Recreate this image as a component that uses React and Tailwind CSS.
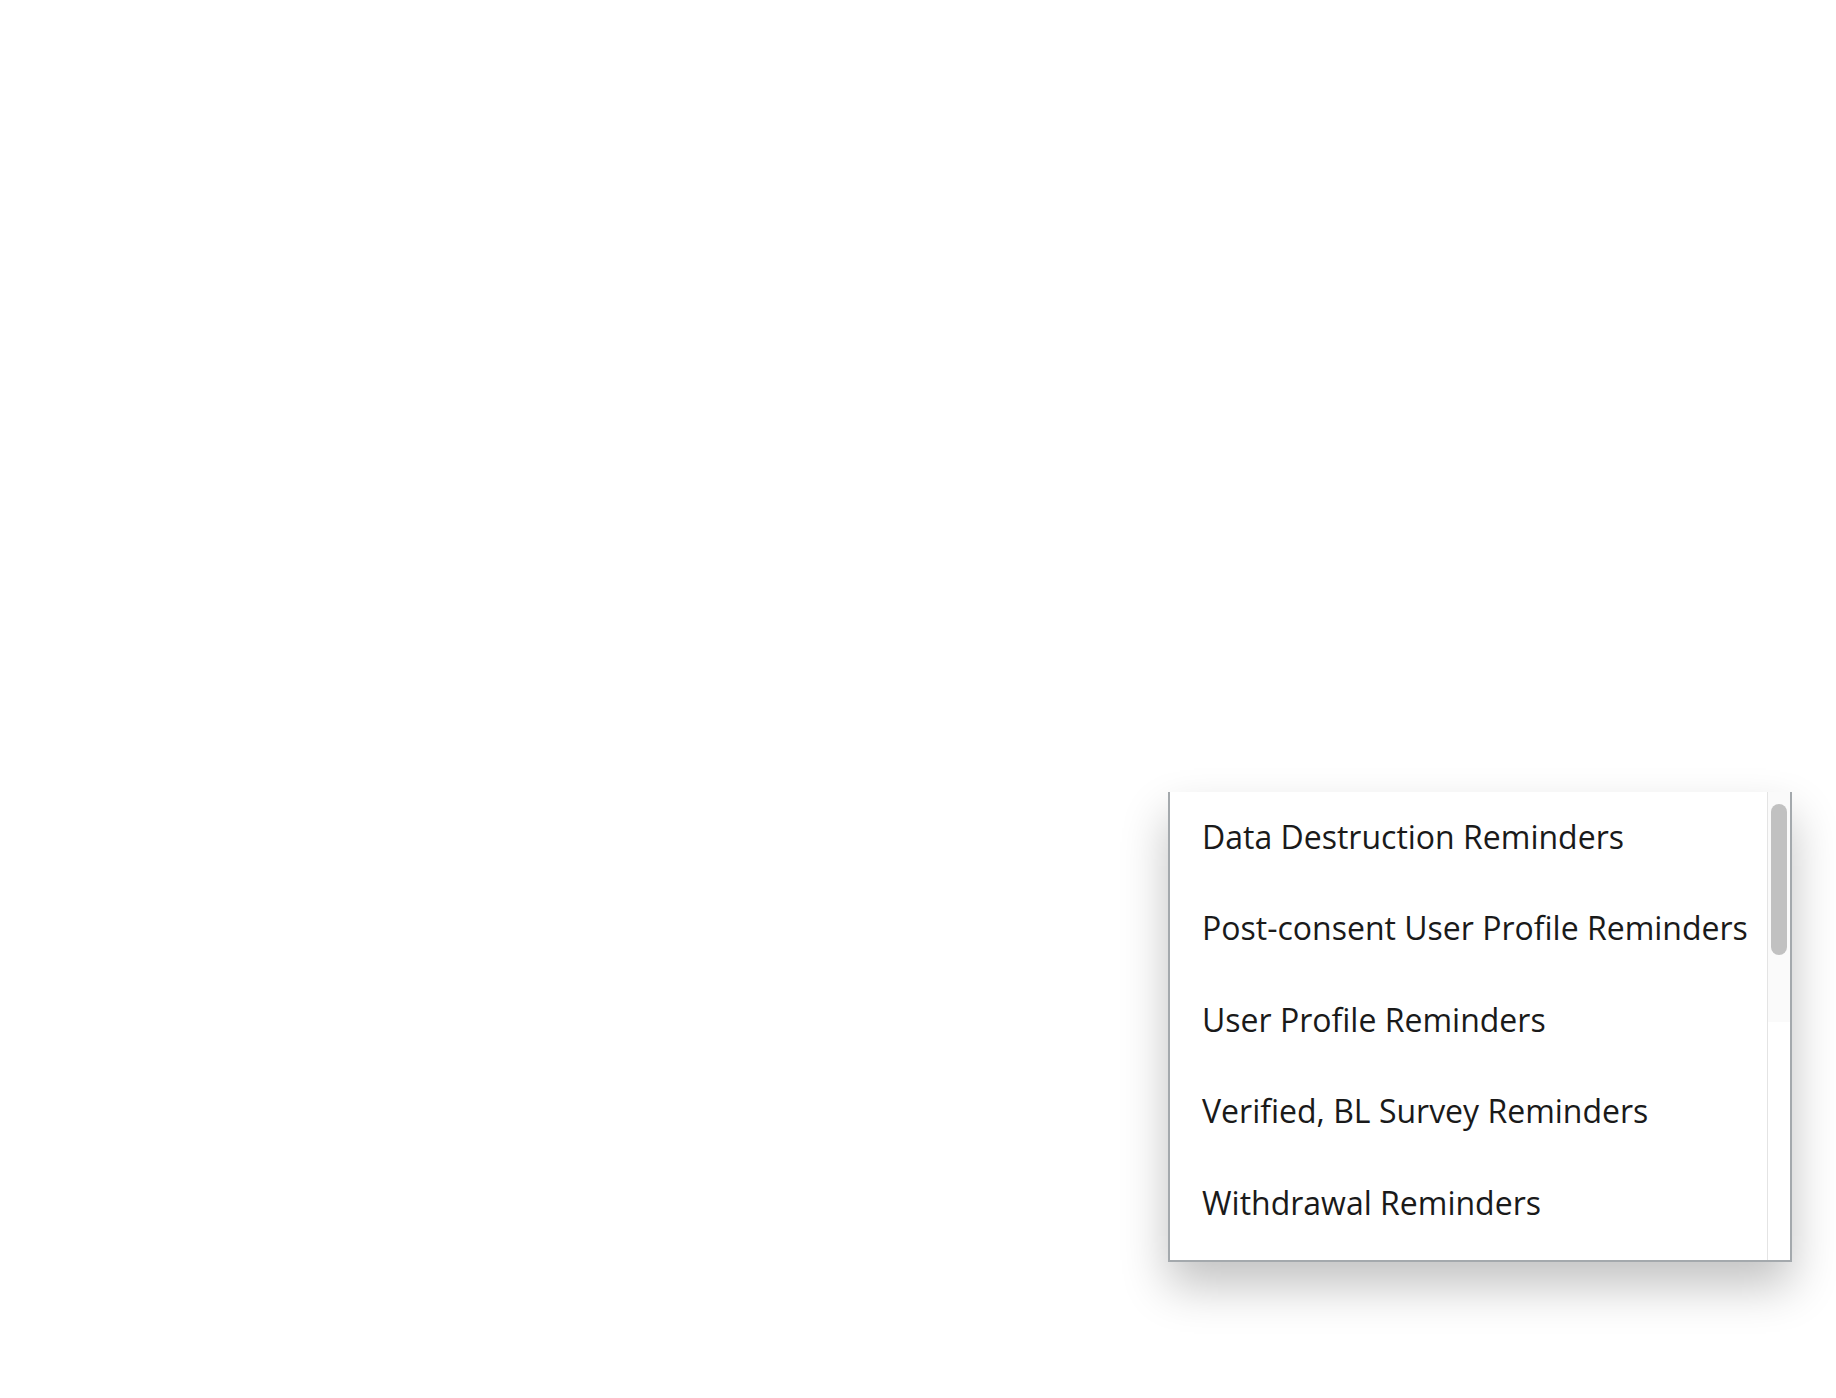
import React from "react";

const items = [
  "Data Destruction Reminders",
  "Post-consent User Profile Reminders",
  "User Profile Reminders",
  "Verified, BL Survey Reminders",
  "Withdrawal Reminders",
];

export default function App() {
  return (
    <div className="relative w-[1836px] h-[1398px] bg-white" style={{ fontFamily: '"Open Sans", "Noto Sans", sans-serif' }}>
      <div className="absolute left-[1168px] top-[792px] w-[624px] h-[470px] bg-white border-x-2 border-b-2 border-[#a4a9ad] shadow-[0_24px_44px_rgba(0,0,0,0.24)] flex">
        <ul className="flex-1 flex flex-col">
          {items.map((t) => (
            <li key={t} className="h-[91.5px] pt-[24.5px] pl-[32px] text-[32px] leading-[40px] text-[#1a1a1a] whitespace-nowrap">
              {t}
            </li>
          ))}
        </ul>
        <div className="w-[23px] border-l border-[#e4e4e4] flex flex-col">
          <div className="h-[230px] bg-[#fafafa] pt-[12px] pl-[3px]">
            <div className="w-[16px] h-[151px] rounded-full bg-[#c1c1c1]" />
          </div>
        </div>
      </div>
    </div>
  );
}
